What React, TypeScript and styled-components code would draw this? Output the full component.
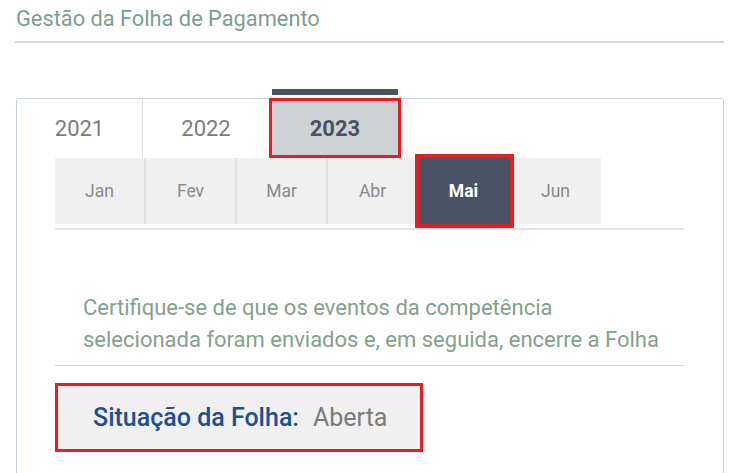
import { createGlobalStyle, styled } from "styled-components";

const years = ["2021", "2022", "2023"];
const months = ["Jan", "Fev", "Mar", "Abr", "Mai", "Jun"];

const App = () => {
  return (
    <Page>
      <GlobalStyle />
      <Header>
        <Title>Gestão da Folha de Pagamento</Title>
      </Header>
      <Card>
        <YearTabs>
          {years.map((y) => (
            <YearTab key={y} $active={y === "2023"}>
              {y}
            </YearTab>
          ))}
        </YearTabs>
        <Body>
          <MonthStrip>
            <MonthRow>
              {months.map((m) => (
                <Month key={m} $active={m === "Mai"}>
                  {m}
                </Month>
              ))}
            </MonthRow>
          </MonthStrip>
          <Notice>
            Certifique-se de que os eventos da competência
            <br />
            selecionada foram enviados e, em seguida, encerre a Folha
          </Notice>
          <Status>
            <StatusLabel>Situação da Folha:</StatusLabel>
            <StatusValue>Aberta</StatusValue>
          </Status>
        </Body>
      </Card>
    </Page>
  );
};

export default App;

const GlobalStyle = createGlobalStyle`
  body {
    margin: 0;
    background: #ffffff;
    font-family: Roboto, "Liberation Sans", sans-serif;
  }
`;

const Page = styled.div`
  width: 734px;
  height: 473px;
  overflow: hidden;
  padding: 0 10px 0 15px;
  box-sizing: border-box;
`;

const Header = styled.div`
  height: 43px;
  border-bottom: 2px solid #cfd5e6;
  padding-left: 1px;
  box-sizing: border-box;
  margin-bottom: 55px;
`;

const Title = styled.div`
  font-size: 21.8px;
  line-height: 38px;
  color: #7f9c94;
`;

const Card = styled.div`
  margin-left: 1px;
  border: 1px solid #c9d1e4;
  border-radius: 3px;
  height: 420px;
`;

const YearTabs = styled.div`
  display: flex;
  height: 59px;
`;

const YearTab = styled.div<{ $active?: boolean }>`
  position: relative;
  width: 126px;
  display: flex;
  align-items: center;
  justify-content: center;
  font-size: 22px;
  box-sizing: border-box;
  color: ${(p) => (p.$active ? "#4a5262" : "#7b7b7b")};
  font-weight: ${(p) => (p.$active ? 700 : 400)};
  background: ${(p) => (p.$active ? "#ced2d5" : "transparent")};
  border: ${(p) => (p.$active ? "3px solid #e51d25" : "none")};

  &:first-child {
    border-right: 1px solid #dcdcdc;
  }

  ${(p) =>
    p.$active &&
    `
    width: 132px;
    margin-top: -1px;
    height: 60px;
    &::before {
      content: "";
      position: absolute;
      left: 0;
      right: 0;
      top: -12px;
      height: 6px;
      background: #4a5266;
    }
  `}
`;

const Body = styled.div`
  padding: 0 39px 0 38px;
`;

const MonthStrip = styled.div`
  border-bottom: 2px solid #e3e3e3;
  padding-bottom: 4px;
`;

const MonthRow = styled.div`
  display: flex;
  width: 546px;
  height: 66px;
  background: #f0f0f0;
`;

const Month = styled.div<{ $active?: boolean }>`
  width: 91px;
  display: flex;
  align-items: center;
  justify-content: center;
  font-size: 17.5px;
  box-sizing: border-box;
  border-right: 2px solid ${(p) => (p.$active ? "transparent" : "#e2e2e2")};
  color: ${(p) => (p.$active ? "#ffffff" : "#8a8a8a")};
  font-weight: ${(p) => (p.$active ? 700 : 400)};
  background: ${(p) => (p.$active ? "#4a5266" : "transparent")};
  outline: ${(p) => (p.$active ? "4px solid #e51d25" : "none")};
  position: relative;

  &:last-child {
    border-right: none;
  }
`;

const Notice = styled.div`
  margin-top: 62px;
  padding: 0 0 9px 28px;
  border-bottom: 1px solid #c9d1e4;
  font-size: 22px;
  line-height: 32px;
  color: #84a08e;
`;

const Status = styled.div`
  margin-top: 17px;
  width: 368px;
  height: 69px;
  box-sizing: border-box;
  background: #f0f0f0;
  border: 3px solid #e51d25;
  display: flex;
  align-items: center;
  padding-left: 35px;
  gap: 14px;
  font-size: 25px;
`;

const StatusLabel = styled.span`
  color: #1d4f91;
  font-weight: 500;
`;

const StatusValue = styled.span`
  color: #7b7b7b;
`;
